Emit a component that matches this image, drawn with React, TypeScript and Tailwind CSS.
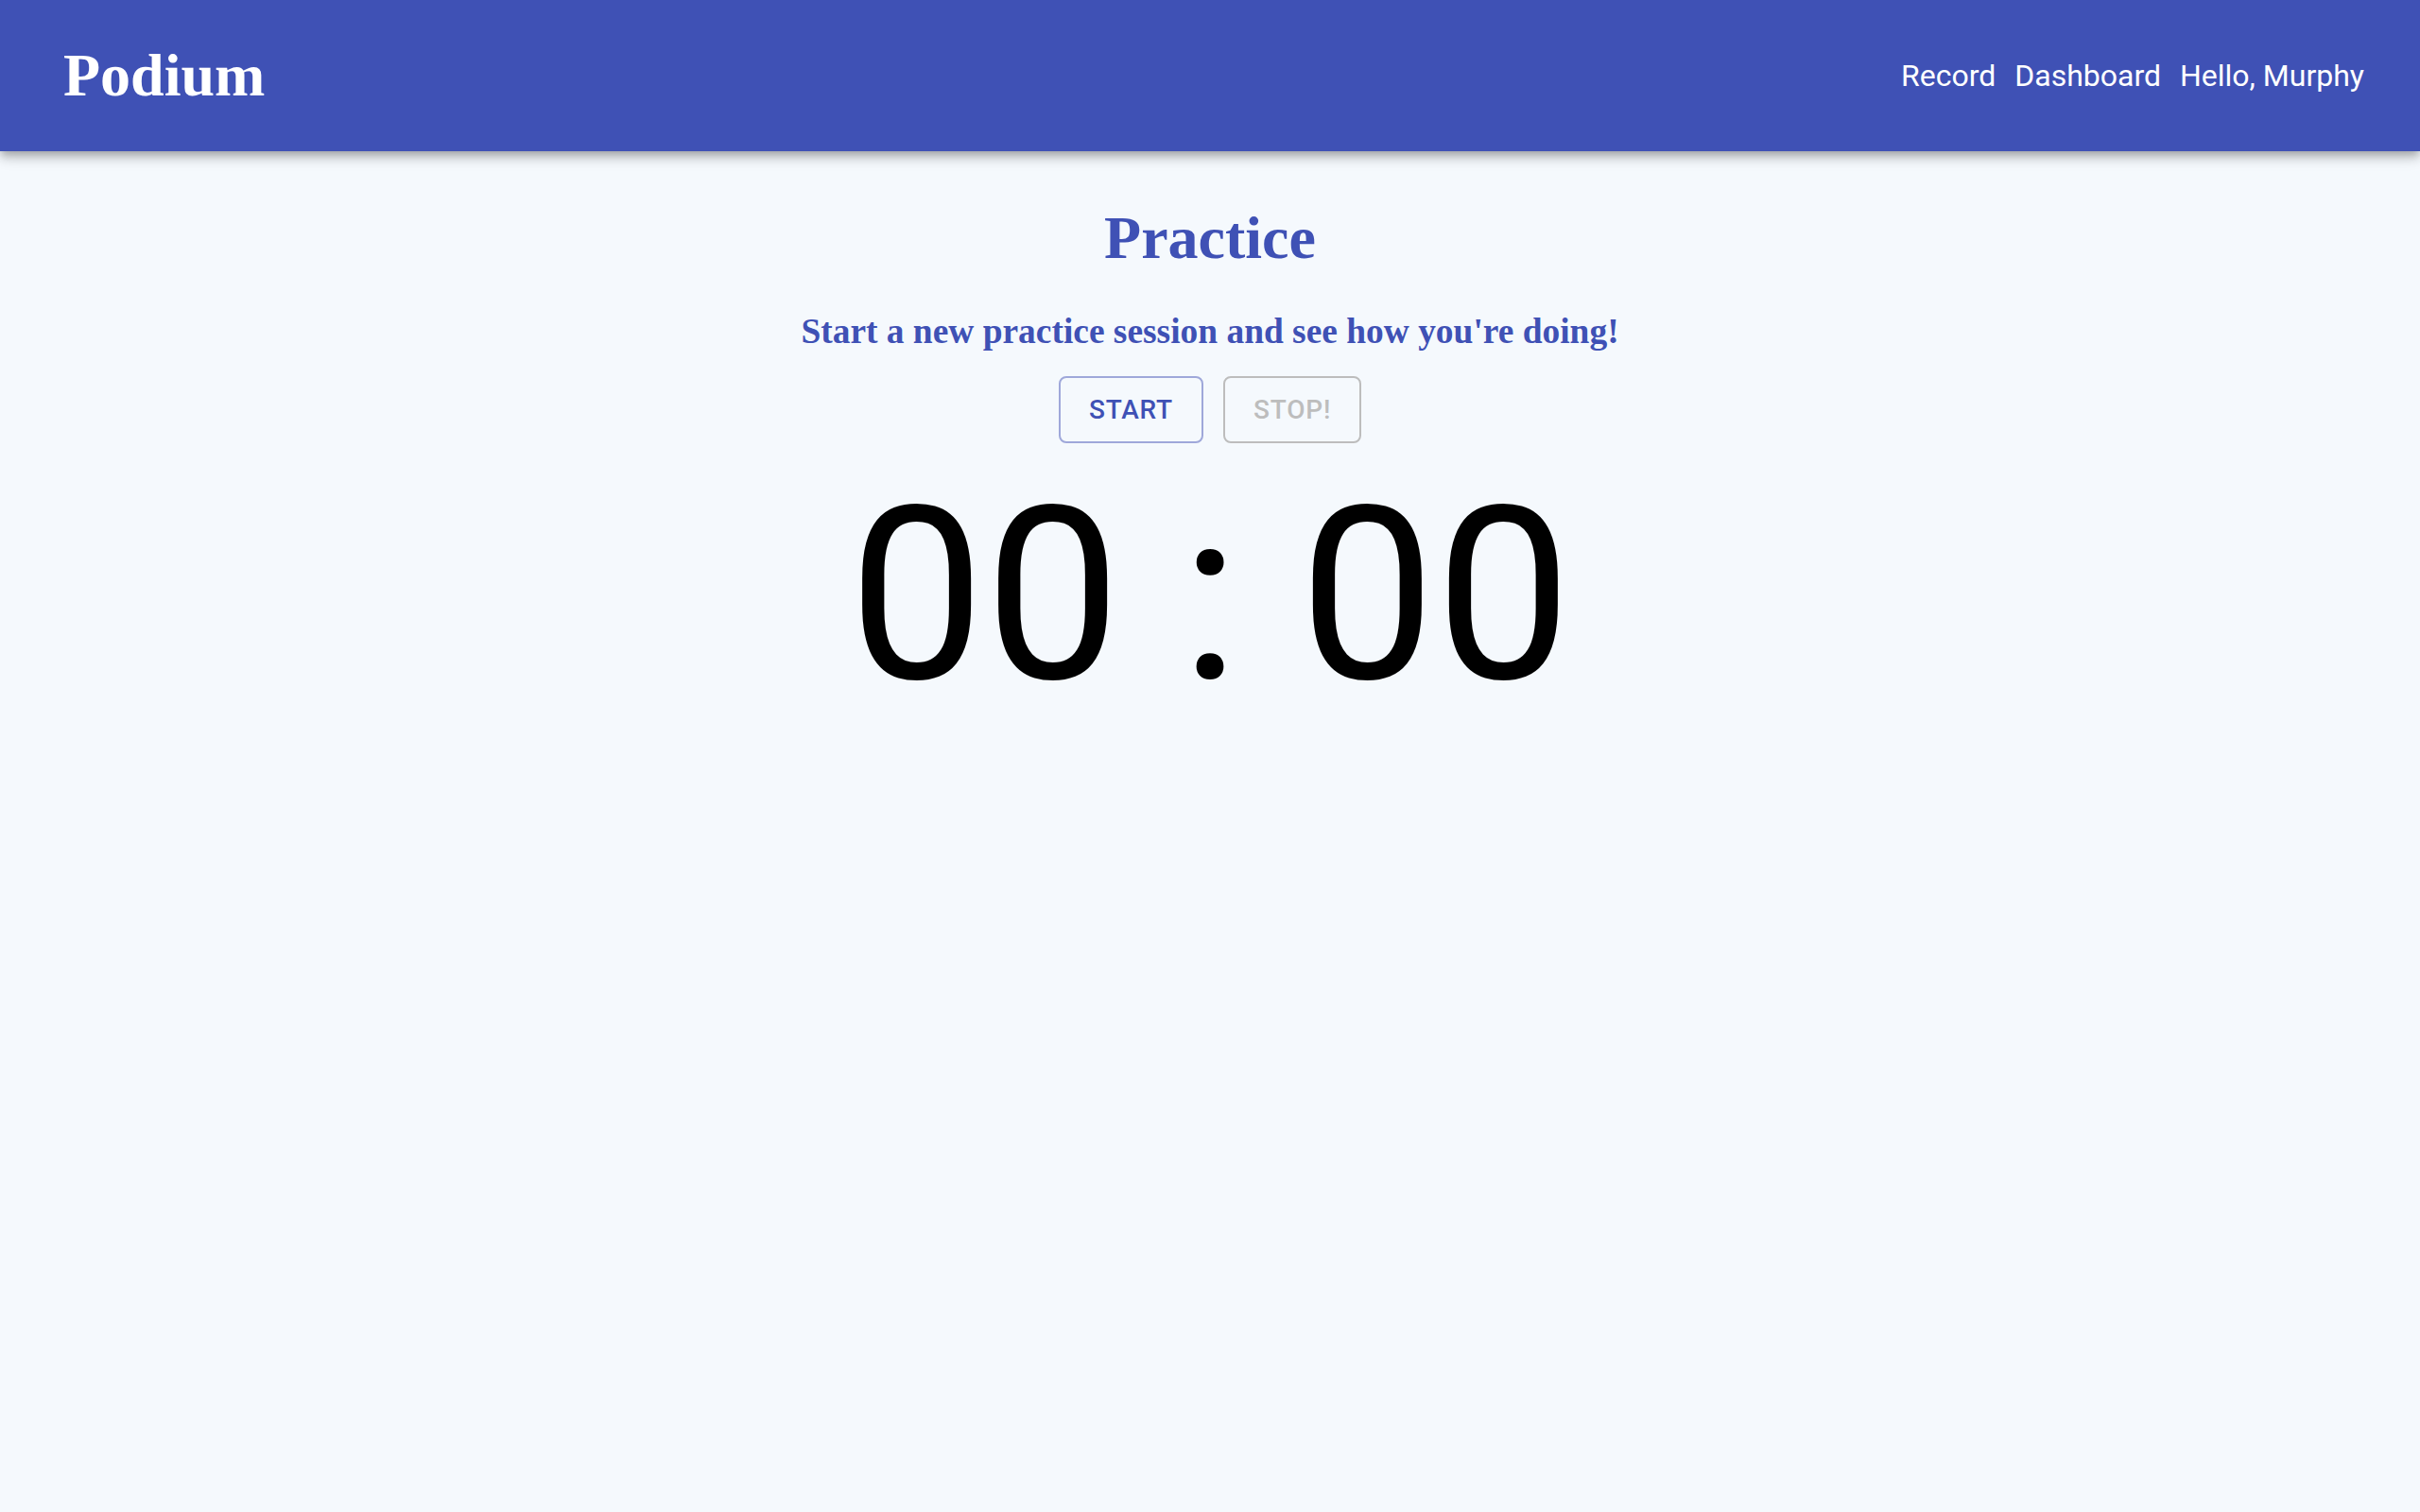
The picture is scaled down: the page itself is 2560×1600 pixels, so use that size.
import React from "react";

export default function App() {
  return (
    <div className="min-h-[1600px] w-full bg-[#f5f9fd]">
      <header className="flex h-[160px] items-center justify-between bg-[#3f51b5] pl-[67px] pr-[59px] shadow-[0px_4px_8px_-2px_rgba(0,0,0,0.2),0px_8px_10px_0px_rgba(0,0,0,0.14),0px_2px_20px_0px_rgba(0,0,0,0.12)]">
        <div className="font-['Liberation_Serif',serif] text-[64px] leading-[normal] font-bold text-white">Podium</div>
        <nav className="flex items-center gap-[20px] font-['Roboto',sans-serif] text-[32px] leading-[normal] text-white">
          <span>Record</span>
          <span>Dashboard</span>
          <span>Hello, Murphy</span>
        </nav>
      </header>
      <main className="flex flex-col items-center">
        <h1 className="mt-[55px] font-['Liberation_Serif',serif] text-[64px] leading-[normal] font-bold text-[#3f51b5]">Practice</h1>
        <h3 className="mt-[40px] font-['Liberation_Serif',serif] text-[37.44px] leading-[normal] font-bold text-[#3f51b5]">
          Start a new practice session and see how you're doing!
        </h3>
        <div className="mt-[26px] flex gap-[21px]">
          <button className="h-[71px] rounded-[8px] border-2 border-[#9fa8da] px-[30px] font-['Roboto',sans-serif] text-[28px] leading-[normal] font-medium tracking-[0.8px] text-[#3f51b5]">
            START
          </button>
          <button className="h-[71px] rounded-[8px] border-2 border-[#bdbdbd] px-[30px] font-['Roboto',sans-serif] text-[28px] leading-[normal] font-medium tracking-[0.8px] text-[#bdbdbd]">
            STOP!
          </button>
        </div>
        <div className="mt-[11px] whitespace-pre font-['Roboto',sans-serif] text-[256px] leading-[normal] text-black">00 : 00</div>
      </main>
    </div>
  );
}
